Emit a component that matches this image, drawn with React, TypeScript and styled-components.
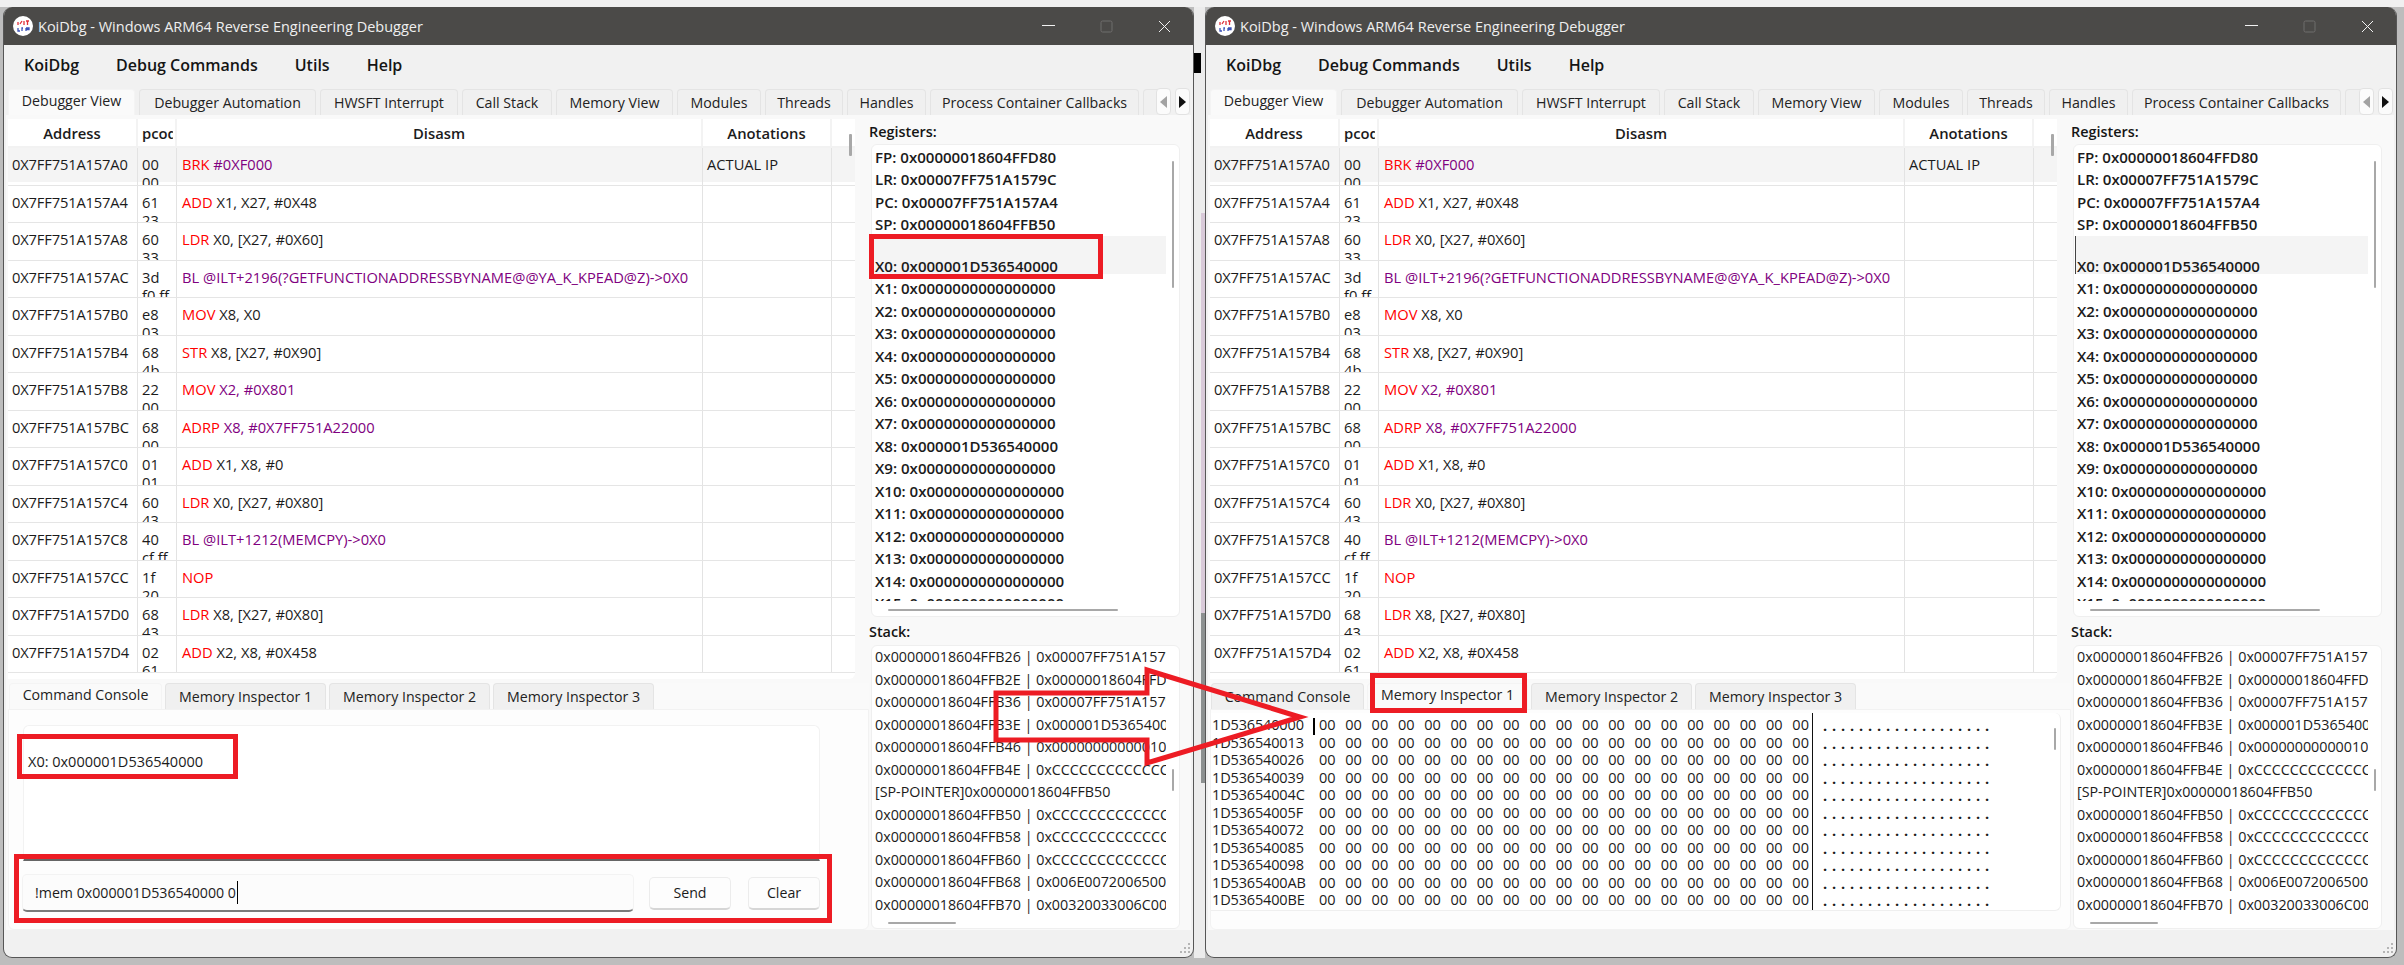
import * as React from 'react';
import styled, { createGlobalStyle } from 'styled-components';

const GlobalStyle = createGlobalStyle`
  html, body {
    margin: 0;
    padding: 0;
    background: #c4c4c4;
  }
  * {
    box-sizing: border-box;
  }
`;

const Desktop = styled.div`
  position: relative;
  display: flex;
  width: 2404px;
  height: 965px;
  padding: 7px 7px 7px 3px;
  overflow: hidden;
  font-family: 'Open Sans', 'Noto Sans', sans-serif;
  color: #1b1b1b;
  background: linear-gradient(#f0f0f0 0 7px, #bdbdbd 7px);
`;

const BehindStrip = styled.div`
  flex: 0 0 11px;
  height: 951px;
  background:
    linear-gradient(#000, #000) 0 46px / 7px 20px no-repeat,
    linear-gradient(#d8c9d8, #d8c9d8) 7px 206px / 4px 400px no-repeat,
    linear-gradient(#8c9090, #8c9090) 7px 606px / 4px 170px no-repeat,
    #ececec;
`;

const WindowFrame = styled.div<{ $width: number }>`
  position: relative;
  display: flex;
  flex-direction: column;
  flex: 0 0 ${p => p.$width}px;
  height: 951px;
  background: #f1f1f1;
  border: 1px solid #565656;
  border-top: 0;
  border-radius: 9px;
  overflow: hidden;
`;

const TitleBar = styled.div`
  display: flex;
  align-items: center;
  flex: 0 0 38px;
  padding-left: 9px;
  background: #4b4a48;
  color: #efefef;
  font-size: 14.5px;
`;

const TitleText = styled.span`
  margin-left: 5px;
  flex: 1;
`;

const WinButton = styled.div<{ $dim?: boolean }>`
  display: flex;
  align-items: center;
  justify-content: center;
  width: 58px;
  height: 38px;
  color: ${p => (p.$dim ? '#6f6e6c' : '#f2f2f2')};
`;

const MenuBar = styled.div`
  display: flex;
  align-items: center;
  gap: 37px;
  flex: 0 0 39px;
  padding-left: 20px;
  font-size: 16px;
  font-weight: 600;
  color: #151515;
`;

const TabRow = styled.div<{ $gap: number }>`
  display: flex;
  gap: ${p => p.$gap}px;
  height: 26px;
  overflow: hidden;
`;

const TopTabs = styled(TabRow)`
  flex: 0 0 26px;
  margin-top: 5px;
  padding-left: 4px;
  padding-right: 37px;
`;

const Tab = styled.div<{ $active?: boolean; $width: number }>`
  display: flex;
  align-items: center;
  justify-content: center;
  flex: 0 0 ${p => p.$width}px;
  height: 26px;
  padding-bottom: ${p => (p.$active ? 4 : 0)}px;
  font-size: 14.2px;
  white-space: nowrap;
  color: #222;
  background: ${p => (p.$active ? '#fafafa' : '#f0f0f0')};
  border: 1px solid ${p => (p.$active ? '#f4f4f4' : '#e4e4e4')};
  border-bottom: 0;
  border-radius: 4px 4px 0 0;
`;

const ScrollButtons = styled.div`
  position: absolute;
  top: 81px;
  right: 3px;
  display: flex;
  gap: 4px;
`;

const ScrollButton = styled.div`
  display: flex;
  align-items: center;
  justify-content: center;
  width: 15px;
  height: 27px;
  background: #fbfbfb;
  border: 1px solid #e2e2e2;
  border-radius: 4px;
`;

const Arrowhead = styled.div<{ $dir: 'left' | 'right' }>`
  width: 0;
  height: 0;
  border-top: 6.5px solid transparent;
  border-bottom: 6.5px solid transparent;
  ${p =>
    p.$dir === 'left'
      ? 'border-right: 7px solid #a2a2a2;'
      : 'border-left: 7px solid #111;'}
`;

const MainPanel = styled.div`
  display: flex;
  flex: 0 0 815px;
  margin: 0 2px 0 2px;
  padding: 4px 0 0 2px;
  background: #f9f9f9;
`;

const LeftColumn = styled.div`
  display: flex;
  flex-direction: column;
  flex: 0 0 861px;
`;

const TableFrame = styled.div`
  position: relative;
  flex: 0 0 560px;
  width: 847px;
  overflow: hidden;
  background: #fff;
  border-radius: 0 0 6px 0;
`;

const columns = '130px 39px 526px 129px';

const HeaderRow = styled.div`
  display: grid;
  grid-template-columns: ${columns};
  height: 29px;
  border-bottom: 2px solid #f2f2f2;
`;

const HeaderCell = styled.div<{ $left?: boolean }>`
  display: flex;
  align-items: center;
  justify-content: ${p => (p.$left ? 'flex-start' : 'center')};
  padding: 0 0 0 ${p => (p.$left ? 4 : 0)}px;
  overflow: hidden;
  font-size: 14.8px;
  font-weight: 600;
  white-space: nowrap;
  border-right: 2px solid #f3f3f3;
`;

const ClippedLabel = styled.span`
  display: block;
  width: 31px;
  overflow: hidden;
`;

const Row = styled.div<{ $selected?: boolean }>`
  display: grid;
  grid-template-columns: ${columns};
  height: 37.5px;
  background: linear-gradient(
    ${p => (p.$selected ? '#f4f4f4' : '#fff')} 0 34px,
    #fff 34px
  );
  border-bottom: 1.5px solid #e5e5e5;
  font-size: 14.7px;
`;

const Cell = styled.div`
  padding: 7px 4px 0 4px;
  line-height: 18px;
  overflow: hidden;
  border-right: 1px solid #e3e3e3;
`;

const AddressCell = styled(Cell)`
  white-space: nowrap;
  letter-spacing: -0.15px;
`;

const DisasmCell = styled(Cell)`
  padding-left: 5px;
  white-space: nowrap;
`;

const Mnemonic = styled.span`
  color: #f00;
`;

const Operand = styled.span`
  color: #800080;
`;

const Thumb = styled.div<{ $left: number; $top: number; $w?: number; $h?: number }>`
  position: absolute;
  left: ${p => p.$left}px;
  top: ${p => p.$top}px;
  width: ${p => p.$w ?? 2}px;
  height: ${p => p.$h ?? 2}px;
  background: #a8a8a8;
  border-radius: 1px;
`;

const LowerTabs = styled(TabRow)`
  flex: 0 0 26px;
  margin-top: 4px;
  padding-left: 1px;
  background: #fafafa;
`;

const LowerPanel = styled.div`
  flex: 0 0 221px;
  background: #fdfdfd;
  border: 1px solid #f2f2f2;
  border-radius: 0 0 6px 6px;
`;

const ConsoleBox = styled.div`
  width: 797px;
  height: 136px;
  margin: 15px 0 0 14px;
  padding: 27px 0 0 4px;
  font-size: 14.5px;
  line-height: 18px;
  background: #fff;
  border: 1px solid #f2f2f2;
  border-bottom: 2px solid #666;
  border-radius: 6px 6px 0 0;
`;

const InputRow = styled.div`
  display: flex;
  align-items: center;
  margin: 13px 0 0 13px;
`;

const CommandInput = styled.div`
  display: flex;
  align-items: center;
  flex: 0 0 612px;
  height: 38px;
  padding-left: 12px;
  font-size: 14.2px;
  background: #fcfcfc;
  border: 1px solid #f3f3f3;
  border-bottom: 2px solid #7a7a7a;
  border-radius: 5px;
`;

const InputCaret = styled.span`
  width: 1px;
  height: 23px;
  margin-left: 1px;
  background: #000;
`;

const PushButton = styled.div<{ $width: number; $gap: number }>`
  display: flex;
  align-items: center;
  justify-content: center;
  flex: 0 0 ${p => p.$width}px;
  height: 33px;
  margin-left: ${p => p.$gap}px;
  font-size: 14.2px;
  background: #fdfdfd;
  border: 1px solid #ececec;
  border-bottom: 2px solid #d6d6d6;
  border-radius: 5px;
`;

const MemoryBox = styled.div`
  position: relative;
  display: flex;
  width: 850px;
  height: 198px;
  margin-top: 3px;
  font-size: 14.5px;
  line-height: 17.5px;
  background: #fff;
  border-right: 1px solid #efefef;
  border-bottom: 1px solid #efefef;
  border-radius: 0 6px 6px 0;
`;

const MemAddresses = styled.div`
  flex: 0 0 108px;
  padding: 3px 0 0 1px;
  letter-spacing: -0.15px;
`;

const MemLine = styled.div`
  height: 17.5px;
  white-space: nowrap;
`;

const MemHex = styled.div`
  display: grid;
  grid-template-columns: repeat(19, 26.3px);
  grid-auto-rows: 17.5px;
  flex: 0 0 494px;
  min-width: 0;
  padding-top: 3px;
  border-right: 1px solid #111;
`;

const MemDots = styled.div`
  display: grid;
  grid-template-columns: repeat(19, 9px);
  grid-auto-rows: 17.5px;
  flex: 1;
  padding: 4px 0 0 10px;
  font-weight: 700;
`;

const MemCaret = styled.div`
  position: absolute;
  left: 102px;
  top: 5px;
  width: 2px;
  height: 17px;
  background: #000;
`;

const RightColumn = styled.div`
  display: flex;
  flex-direction: column;
  flex: 1;
`;

const GroupLabel = styled.div<{ $height: number }>`
  display: flex;
  align-items: center;
  flex: 0 0 ${p => p.$height}px;
  font-size: 14.4px;
  font-weight: 600;
  color: #151515;
`;

const ListBox = styled.div<{ $height: number }>`
  position: relative;
  flex: 0 0 ${p => p.$height}px;
  width: 309px;
  margin-left: 2px;
  background: #fff;
  border: 1px solid #efefef;
  border-radius: 6px;
`;

const ListClip = styled.div<{ $height: number; $pad: number }>`
  width: 293px;
  height: ${p => p.$height}px;
  margin-left: 1px;
  padding-top: ${p => p.$pad}px;
  overflow: hidden;
`;

const RegRow = styled.div`
  height: 22.5px;
  padding-left: 2px;
  line-height: 22.5px;
  font-size: 15.05px;
  font-weight: 600;
  white-space: nowrap;
`;

const RegRowActive = styled(RegRow)<{ $caret?: boolean }>`
  display: flex;
  align-items: flex-end;
  height: 38px;
  margin-bottom: 3.5px;
  padding-bottom: 0;
  line-height: 16px;
  background: #f4f4f4;
  border-left: ${p => (p.$caret ? '1px solid #444' : '1px solid #f4f4f4')};
  padding-left: 1px;
`;

const StackRow = styled.div`
  height: 22.5px;
  padding-left: 2px;
  line-height: 22.5px;
  font-size: 14.3px;
  white-space: nowrap;
`;

const Grip = styled.svg`
  position: absolute;
  right: 1px;
  bottom: 1px;
`;

const Overlay = styled.svg`
  position: absolute;
  left: 0;
  top: 0;
  pointer-events: none;
`;

type Piece = { m?: string; o?: string; t?: string };

const rows: { addr: string; op: string; dis: Piece; note?: string }[] = [
  { addr: '0X7FF751A157A0', op: '00 00', dis: { m: 'BRK', o: ' #0XF000' }, note: 'ACTUAL IP' },
  { addr: '0X7FF751A157A4', op: '61 23', dis: { m: 'ADD', t: ' X1, X27, #0X48' } },
  { addr: '0X7FF751A157A8', op: '60 33', dis: { m: 'LDR', t: ' X0, [X27, #0X60]' } },
  { addr: '0X7FF751A157AC', op: '3d f0 ff', dis: { o: 'BL @ILT+2196(?GETFUNCTIONADDRESSBYNAME@@YA_K_KPEAD@Z)->0X0' } },
  { addr: '0X7FF751A157B0', op: 'e8 03', dis: { m: 'MOV', t: ' X8, X0' } },
  { addr: '0X7FF751A157B4', op: '68 4b', dis: { m: 'STR', t: ' X8, [X27, #0X90]' } },
  { addr: '0X7FF751A157B8', op: '22 00', dis: { m: 'MOV', o: ' X2, #0X801' } },
  { addr: '0X7FF751A157BC', op: '68 00', dis: { m: 'ADRP', o: ' X8, #0X7FF751A22000' } },
  { addr: '0X7FF751A157C0', op: '01 01', dis: { m: 'ADD', t: ' X1, X8, #0' } },
  { addr: '0X7FF751A157C4', op: '60 43', dis: { m: 'LDR', t: ' X0, [X27, #0X80]' } },
  { addr: '0X7FF751A157C8', op: '40 cf ff', dis: { o: 'BL @ILT+1212(MEMCPY)->0X0' } },
  { addr: '0X7FF751A157CC', op: '1f 20', dis: { m: 'NOP' } },
  { addr: '0X7FF751A157D0', op: '68 43', dis: { m: 'LDR', t: ' X8, [X27, #0X80]' } },
  { addr: '0X7FF751A157D4', op: '02 61', dis: { m: 'ADD', t: ' X2, X8, #0X458' } },
];

const topTabs = [
  { label: 'Debugger View', width: 127 },
  { label: 'Debugger Automation', width: 177 },
  { label: 'HWSFT Interrupt', width: 138 },
  { label: 'Call Stack', width: 90 },
  { label: 'Memory View', width: 117 },
  { label: 'Modules', width: 84 },
  { label: 'Threads', width: 78 },
  { label: 'Handles', width: 79 },
  { label: 'Process Container Callbacks', width: 209 },
  { label: '', width: 20 },
];

const lowerTabs = [
  { label: 'Command Console', width: 153 },
  { label: 'Memory Inspector 1', width: 161 },
  { label: 'Memory Inspector 2', width: 161 },
  { label: 'Memory Inspector 3', width: 161 },
];

const special = ['FP: 0x00000018604FFD80', 'LR: 0x00007FF751A1579C', 'PC: 0x00007FF751A157A4', 'SP: 0x00000018604FFB50'];

const regNames = [
  'X1', 'X2', 'X3', 'X4', 'X5', 'X6', 'X7', 'X8', 'X9', 'X10', 'X11', 'X12', 'X13', 'X14', 'X15',
];

const regValue = (name: string) =>
  name === 'X8' ? '0x000001D536540000' : '0x0000000000000000';

const stack = [
  '0x00000018604FFB26 | 0x00007FF751A1577C',
  '0x00000018604FFB2E | 0x00000018604FFD80',
  '0x00000018604FFB36 | 0x00007FF751A1579C',
  '0x00000018604FFB3E | 0x000001D536540000',
  '0x00000018604FFB46 | 0x0000000000001000',
  '0x00000018604FFB4E | 0xCCCCCCCCCCCCCCCC',
  '[SP-POINTER]0x00000018604FFB50',
  '0x00000018604FFB50 | 0xCCCCCCCCCCCCCCCC',
  '0x00000018604FFB58 | 0xCCCCCCCCCCCCCCCC',
  '0x00000018604FFB60 | 0xCCCCCCCCCCCCCCCC',
  '0x00000018604FFB68 | 0x006E007200650000',
  '0x00000018604FFB70 | 0x00320033006C0000',
];

const memAddrs = [
  '1D536540000', '1D536540013', '1D536540026', '1D536540039', '1D53654004C', '1D53654005F',
  '1D536540072', '1D536540085', '1D536540098', '1D5365400AB', '1D5365400BE',
];

const Logo = () => (
  <svg width="20" height="20" viewBox="0 0 20 20">
    <circle cx="10" cy="10" r="10" fill="#fff" />
    <path d="M5 9V6M7 8l2-3M11 5v4M13 5h3M14.500 5v4" stroke="#e0303a" strokeWidth="1.300" fill="none" />
    <path d="M5 12v3h2M10 12h-1v3M13 12h3v1.500h-3M13 12v3" stroke="#3c52b8" strokeWidth="1.300" fill="none" />
  </svg>
);

const WindowTitle = () => (
  <TitleBar>
    <Logo />
    <TitleText>KoiDbg - Windows ARM64 Reverse Engineering Debugger</TitleText>
    <WinButton>
      <svg width="13" height="2"><rect width="13" height="1" fill="currentColor" /></svg>
    </WinButton>
    <WinButton $dim>
      <svg width="13" height="13" viewBox="0 0 13 13">
        <rect x="1" y="1" width="11" height="11" rx="1.500" fill="none" stroke="currentColor" />
      </svg>
    </WinButton>
    <WinButton>
      <svg width="13" height="13" viewBox="0 0 13 13">
        <path d="M1 1l11 11M12 1L1 12" stroke="currentColor" fill="none" />
      </svg>
    </WinButton>
  </TitleBar>
);

const DisasmTable = () => (
  <TableFrame>
    <HeaderRow>
      <HeaderCell>Address</HeaderCell>
      <HeaderCell $left><ClippedLabel>pcode</ClippedLabel></HeaderCell>
      <HeaderCell>Disasm</HeaderCell>
      <HeaderCell>Anotations</HeaderCell>
    </HeaderRow>
    {rows.map((r, i) => (
      <Row key={r.addr} $selected={i === 0}>
        <AddressCell>{r.addr}</AddressCell>
        <Cell>{r.op}</Cell>
        <DisasmCell>
          {r.dis.m && <Mnemonic>{r.dis.m}</Mnemonic>}
          {r.dis.o && <Operand>{r.dis.o}</Operand>}
          {r.dis.t}
        </DisasmCell>
        <Cell>{r.note}</Cell>
      </Row>
    ))}
    <Thumb $left={841} $top={15} $w={3} $h={22} />
  </TableFrame>
);

const ConsolePane = () => (
  <LowerPanel>
    <ConsoleBox>X0: 0x000001D536540000</ConsoleBox>
    <InputRow>
      <CommandInput>
        !mem 0x000001D536540000 0<InputCaret />
      </CommandInput>
      <PushButton $width={82} $gap={15}>Send</PushButton>
      <PushButton $width={72} $gap={17}>Clear</PushButton>
    </InputRow>
  </LowerPanel>
);

const MemoryPane = () => (
  <LowerPanel>
    <MemoryBox>
      <MemAddresses>
        {memAddrs.map(a => (
          <MemLine key={a}>{a}</MemLine>
        ))}
      </MemAddresses>
      <MemHex>
        {Array.from({ length: 19 * memAddrs.length }, (_, i) => (
          <span key={i}>00</span>
        ))}
      </MemHex>
      <MemDots>
        {Array.from({ length: 19 * memAddrs.length }, (_, i) => (
          <span key={i}>.</span>
        ))}
      </MemDots>
      <MemCaret />
      <Thumb $left={843} $top={15} $h={22} />
    </MemoryBox>
  </LowerPanel>
);

const SidePanel = ({ caret }: { caret: boolean }) => (
  <RightColumn>
    <GroupLabel $height={25}>Registers:</GroupLabel>
    <ListBox $height={473}>
      <ListClip $height={456} $pad={0.5}>
        {special.map(s => (
          <RegRow key={s}>{s}</RegRow>
        ))}
        <RegRowActive $caret={caret}>X0: 0x000001D536540000</RegRowActive>
        {regNames.map(n => (
          <RegRow key={n}>{n}: {regValue(n)}</RegRow>
        ))}
      </ListClip>
      <Thumb $left={300} $top={16} $h={127} />
      <Thumb $left={16} $top={464} $w={230} />
    </ListBox>
    <GroupLabel $height={28}>Stack:</GroupLabel>
    <ListBox $height={284}>
      <ListClip $height={271} $pad={0}>
        {stack.map(s => (
          <StackRow key={s}>{s}</StackRow>
        ))}
      </ListClip>
      <Thumb $left={300} $top={123} $h={22} />
      <Thumb $left={16} $top={276} $w={68} />
    </ListBox>
  </RightColumn>
);

const DebuggerWindow = ({ width, inspector }: { width: number; inspector: boolean }) => (
  <WindowFrame $width={width}>
    <WindowTitle />
    <MenuBar>
      <span>KoiDbg</span>
      <span>Debug Commands</span>
      <span>Utils</span>
      <span>Help</span>
    </MenuBar>
    <TopTabs $gap={4}>
      {topTabs.map((t, i) => (
        <Tab key={t.label} $active={i === 0} $width={t.width}>{t.label}</Tab>
      ))}
    </TopTabs>
    <ScrollButtons>
      <ScrollButton><Arrowhead $dir="left" /></ScrollButton>
      <ScrollButton><Arrowhead $dir="right" /></ScrollButton>
    </ScrollButtons>
    <MainPanel>
      <LeftColumn>
        <DisasmTable />
        <LowerTabs $gap={3}>
          {lowerTabs.map((t, i) => (
            <Tab key={t.label} $active={inspector ? i === 1 : i === 0} $width={t.width}>{t.label}</Tab>
          ))}
        </LowerTabs>
        {inspector ? <MemoryPane /> : <ConsolePane />}
      </LeftColumn>
      <SidePanel caret={inspector} />
    </MainPanel>
    <Grip width="14" height="14" viewBox="0 0 14 14" fill="#b5b5b5">
      <rect x="10" y="1" width="2" height="2" />
      <rect x="6" y="5" width="2" height="2" />
      <rect x="10" y="5" width="2" height="2" />
      <rect x="2" y="9" width="2" height="2" />
      <rect x="6" y="9" width="2" height="2" />
      <rect x="10" y="9" width="2" height="2" />
    </Grip>
  </WindowFrame>
);

export default function App() {
  return (
    <>
      <GlobalStyle />
      <Desktop>
        <DebuggerWindow width={1191} inspector={false} />
        <BehindStrip />
        <DebuggerWindow width={1192} inspector />
        <Overlay width="2404" height="965" fill="none" stroke="#ed1c24" strokeWidth="5">
          <rect x="871.500" y="236.500" width="229" height="40" />
          <rect x="19.500" y="736.500" width="216" height="40" />
          <rect x="16.500" y="856.500" width="813" height="64" />
          <rect x="1372.500" y="675.500" width="152" height="35" />
          <polygon points="996,693 1147,693 1147,670 1300,717 1147,763 1147,740 996,740" />
        </Overlay>
      </Desktop>
    </>
  );
}
